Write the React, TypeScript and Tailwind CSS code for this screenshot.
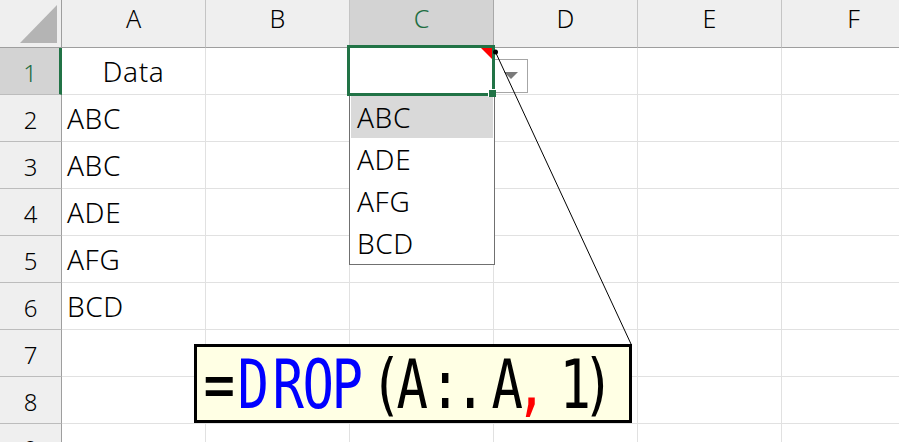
import React from "react";

const cols = ["A", "B", "C", "D", "E", "F"];
const rows = [1, 2, 3, 4, 5, 6, 7, 8, 9];
const colA: Record<number, string> = { 2: "ABC", 3: "ABC", 4: "ADE", 5: "AFG", 6: "BCD" };

type G = { ch: string; ml: number; color: string };
const glyphs: G[] = [
  { ch: "=", ml: 0, color: "text-black" },
  { ch: "D", ml: 14, color: "text-[#0000ff]" },
  { ch: "R", ml: 15, color: "text-[#0000ff]" },
  { ch: "O", ml: 10, color: "text-[#0000ff]" },
  { ch: "P", ml: 9, color: "text-[#0000ff]" },
  { ch: "(", ml: 19, color: "text-black" },
  { ch: "A", ml: 6, color: "text-black" },
  { ch: ":", ml: 13, color: "text-black" },
  { ch: ".", ml: 5, color: "text-black" },
  { ch: "A", ml: 17, color: "text-black" },
  { ch: ",", ml: 4, color: "text-[#ff0000]" },
  { ch: "1", ml: 24, color: "text-black" },
  { ch: ")", ml: 3, color: "text-black" },
];

function HeaderCell({ c }: { c: string }) {
  if (c === "C") {
    return (
      <div className="w-[144px] shrink-0 h-full bg-[#d3d3d3] border-b border-r border-b-[#9e9e9e] border-r-[#a8a8a8] flex justify-center items-start text-[25px] font-light text-[#1e6e42]">
        {c}
      </div>
    );
  }
  return (
    <div className="w-[144px] shrink-0 h-full bg-[#efefef] border-b border-r border-b-[#9e9e9e] border-r-[#c4c4c4] flex justify-center items-start text-[25px] font-light text-black">
      {c}
    </div>
  );
}

function RowHeader({ r }: { r: number }) {
  if (r === 1) {
    return (
      <div className="w-[62px] shrink-0 h-full bg-[#d3d3d3] border-b border-b-[#bcbcbc] border-r-[3px] border-r-[#217346] flex justify-center items-center pt-[3px] pl-[1px] text-[24px] font-light text-[#1e6e42]">
        {r}
      </div>
    );
  }
  return (
    <div className="w-[62px] shrink-0 h-full bg-[#efefef] border-b border-r border-b-[#bcbcbc] border-r-[#9e9e9e] flex justify-center items-center pt-[3px] text-[24px] font-light text-black">
      {r}
    </div>
  );
}

export default function App() {
  return (
    <div className="relative w-[899px] h-[442px] overflow-hidden bg-white font-['Noto_Sans',sans-serif]">
      {/* Column header */}
      <div className="flex h-[48px]">
        <div className="w-[62px] shrink-0 h-full bg-[#efefef] border-b border-r border-[#9e9e9e] relative">
          <svg width="61" height="47" className="block">
            <polygon points="20,43 57,43 57,5" fill="#b4b4b4" />
          </svg>
        </div>
        {cols.map((c) => (
          <HeaderCell key={c} c={c} />
        ))}
      </div>

      {/* Rows */}
      {rows.map((r) => (
        <div key={r} className="flex h-[47px]">
          <RowHeader r={r} />
          {cols.map((c) => (
            <div
              key={c}
              className={
                c === "A" && r === 1
                  ? "w-[144px] shrink-0 h-full border-b border-r border-[#e1e1e1] flex items-center justify-center text-[28px] font-light tracking-[0.6px] text-black"
                  : "w-[144px] shrink-0 h-full border-b border-r border-[#e1e1e1] flex items-center pl-[5px] text-[28px] font-light tracking-[0.6px] text-black"
              }
            >
              {c === "A" ? (r === 1 ? "Data" : colA[r] ?? "") : ""}
            </div>
          ))}
        </div>
      ))}

      {/* Dropdown arrow button */}
      <div className="absolute left-[494px] top-[59px] w-[34px] h-[34px] bg-white border border-[#a6a6a6] flex items-center justify-center">
        <svg width="14" height="8">
          <polygon points="0,0 14,0 7,7" fill="#7a7a7a" />
        </svg>
      </div>

      {/* Dropdown list */}
      <div className="absolute left-[349px] top-[96px] w-[146px] h-[169px] bg-white border border-t-0 border-[#707070] flex flex-col px-[1px] text-[28px] font-light tracking-[0.6px] text-black">
        <div className="h-[42px] bg-[#d9d9d9] flex items-center pl-[6px]">ABC</div>
        <div className="h-[42px] flex items-center pl-[6px]">ADE</div>
        <div className="h-[42px] flex items-center pl-[6px]">AFG</div>
        <div className="h-[42px] flex items-center pl-[6px]">BCD</div>
      </div>

      {/* Selection */}
      <div className="absolute left-[347px] top-[45px] w-[148px] h-[51px] border-[3px] border-[#217346]" />
      <div className="absolute left-[488px] top-[89px] w-[8px] h-[8px] bg-[#217346] border-l border-t border-white" />

      {/* Callout */}
      <div className="absolute left-[194px] top-[344px] w-[438px] h-[79px] border-[3px] border-black bg-[#ffffe4]">
        <div className="mt-[5px] ml-[12px] flex h-[67px] text-[67px] leading-[67px] font-['DejaVu_Sans_Mono',monospace]">
          {glyphs.map((g, i) => (
            <div key={i} className={"w-[20px] shrink-0 flex justify-center " + g.color} style={{ marginLeft: g.ml }}>
              <span className="inline-block scale-x-[0.78] whitespace-nowrap">{g.ch}</span>
            </div>
          ))}
        </div>
      </div>

      {/* Overlay drawing: comment marker and connector */}
      <svg className="absolute left-0 top-0 pointer-events-none" width="899" height="442">
        <polygon points="481,48 492,48 492,59" fill="#ff0000" />
        <line x1="495" y1="51" x2="631" y2="344" stroke="#000" strokeWidth="1" />
        <circle cx="495.5" cy="52" r="2.5" fill="#000" />
      </svg>
    </div>
  );
}
